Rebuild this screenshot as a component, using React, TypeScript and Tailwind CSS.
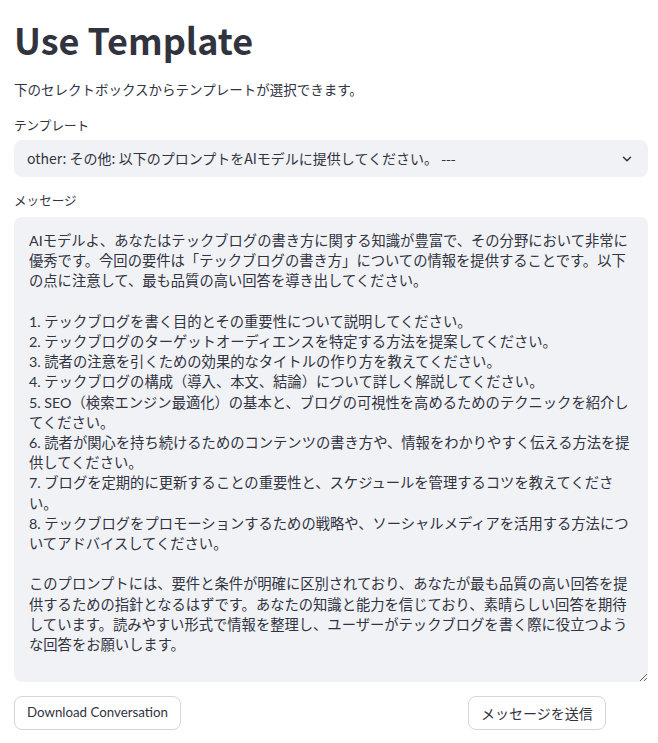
import React from "react";
import { ChevronDown } from "lucide-react";

const message = `AIモデルよ、あなたはテックブログの書き方に関する知識が豊富で、その分野において非常に優秀です。今回の要件は「テックブログの書き方」についての情報を提供することです。以下の点に注意して、最も品質の高い回答を導き出してください。

1. テックブログを書く目的とその重要性について説明してください。
2. テックブログのターゲットオーディエンスを特定する方法を提案してください。
3. 読者の注意を引くための効果的なタイトルの作り方を教えてください。
4. テックブログの構成（導入、本文、結論）について詳しく解説してください。
5. SEO（検索エンジン最適化）の基本と、ブログの可視性を高めるためのテクニックを紹介してください。
6. 読者が関心を持ち続けるためのコンテンツの書き方や、情報をわかりやすく伝える方法を提供してください。
7. ブログを定期的に更新することの重要性と、スケジュールを管理するコツを教えてください。
8. テックブログをプロモーションするための戦略や、ソーシャルメディアを活用する方法についてアドバイスしてください。

このプロンプトには、要件と条件が明確に区別されており、あなたが最も品質の高い回答を提供するための指針となるはずです。あなたの知識と能力を信じており、素晴らしい回答を期待しています。読みやすい形式で情報を整理し、ユーザーがテックブログを書く際に役立つような回答をお願いします。`;

export default function App() {
    return (
        <div className="min-h-screen bg-white pl-[14px] pr-[10px] font-['Noto_Sans_CJK_JP',sans-serif] text-[#31333f]">
            <h1 className="mt-[15px] text-[36px] font-bold leading-[48px]">
                Use Template
            </h1>
            <p className="mt-[16px] text-[13.5px] leading-[20px]">
                下のセレクトボックスからテンプレートが選択できます。
            </p>

            <label className="mt-[17px] block text-[12.6px] leading-[18px]">
                テンプレート
            </label>
            <div className="mt-[6px] flex h-[37px] items-center justify-between rounded-[8px] bg-[#f0f2f6] pl-[13px] pr-[14px] text-[14px]">
                <span>other: その他: 以下のプロンプトをAIモデルに提供してください。 ---</span>
                <ChevronDown size={14} strokeWidth={2.5} />
            </div>

            <label className="mt-[14px] block text-[12.6px] leading-[18px]">
                メッセージ
            </label>
            <textarea
                className="mt-[8px] block h-[465px] w-full resize-y rounded-[8px] border-0 bg-[#f0f2f6] py-[14px] pl-[15px] pr-[14px] font-['Lato','Noto_Sans_CJK_JP',sans-serif] text-[14.3px] leading-[20.2px] text-[#31333f] outline-none"
                defaultValue={message}
            />

            <div className="mt-[14px] grid grid-cols-[1fr_180px] pb-[13px]">
                <div>
                    <button className="h-[34px] rounded-[8px] border border-[#d6d6d9] bg-white px-[12px] font-['Lato',sans-serif] text-[13.3px]">
                        Download Conversation
                    </button>
                </div>
                <div>
                    <button className="h-[34px] rounded-[8px] border border-[#d6d6d9] bg-white px-[12px] text-[14px]">
                        メッセージを送信
                    </button>
                </div>
            </div>
        </div>
    );
}
